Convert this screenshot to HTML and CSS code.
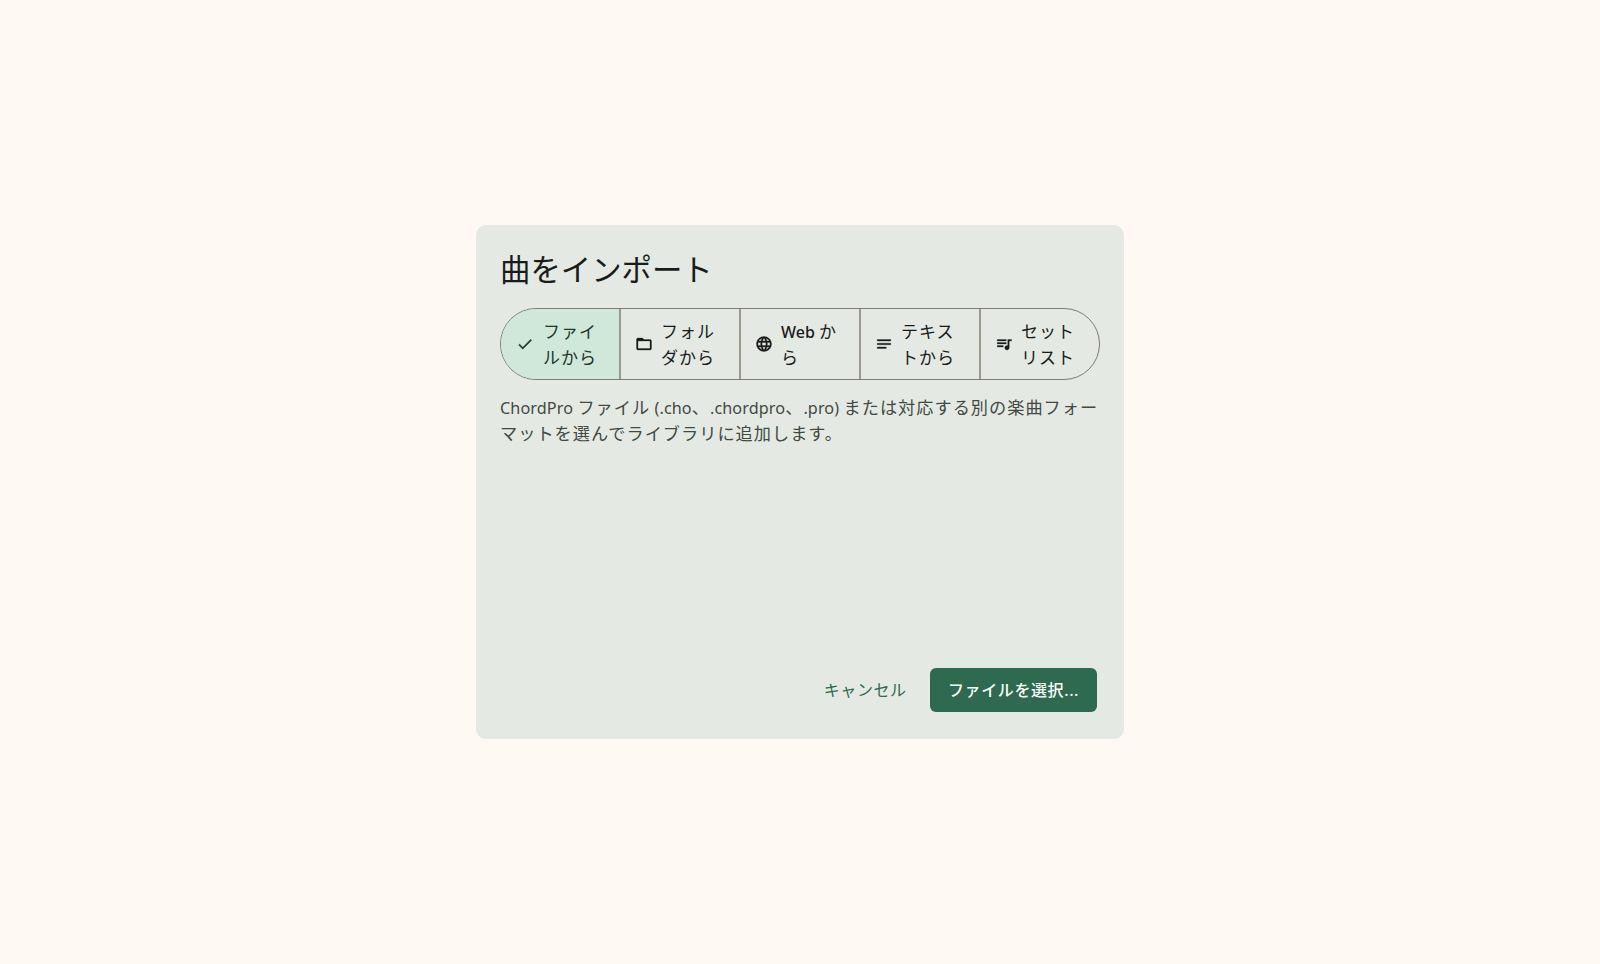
FILE: index.html
```html
<!DOCTYPE html>
<html lang="ja">
<head>
  <meta charset="UTF-8">
  <title>曲をインポート</title>
  <link rel="stylesheet" href="styles.css">
</head>
<body>
  <div class="dialog">
    <h2>曲をインポート</h2>

    <div class="segments">
      <div class="segment selected">
        <svg class="icon" viewBox="0 0 24 24"><path d="M9 16.17 4.83 12l-1.42 1.41L9 19 21 7l-1.41-1.41z"/></svg>
        <span class="label">ファイルから</span>
      </div>
      <div class="segment">
        <svg class="icon" viewBox="0 0 24 24"><path d="M20 6h-8l-2-2H4c-1.1 0-2 .9-2 2v12c0 1.1.9 2 2 2h16c1.1 0 2-.9 2-2V8c0-1.1-.9-2-2-2zm0 12H4V8h16v10z"/></svg>
        <span class="label">フォルダから</span>
      </div>
      <div class="segment">
        <svg class="icon" viewBox="0 0 24 24"><path d="M11.99 2C6.47 2 2 6.48 2 12s4.47 10 9.99 10C17.52 22 22 17.52 22 12S17.52 2 11.99 2zm6.93 6h-2.95c-.32-1.25-.78-2.45-1.38-3.56 1.84.63 3.37 1.91 4.33 3.56zM12 4.04c.83 1.2 1.48 2.53 1.91 3.96h-3.82c.43-1.43 1.08-2.76 1.91-3.96zM4.26 14C4.1 13.36 4 12.69 4 12s.1-1.36.26-2h3.38c-.08.66-.14 1.32-.14 2s.06 1.34.14 2H4.26zm.82 2h2.95c.32 1.25.78 2.45 1.38 3.56-1.84-.63-3.37-1.9-4.33-3.56zm2.95-8H5.08c.96-1.66 2.49-2.93 4.33-3.56C8.81 5.55 8.35 6.75 8.03 8zM12 19.96c-.83-1.2-1.48-2.53-1.91-3.96h3.82c-.43 1.43-1.08 2.76-1.91 3.96zM14.34 14H9.66c-.09-.66-.16-1.32-.16-2s.07-1.35.16-2h4.68c.09.65.16 1.32.16 2s-.07 1.34-.16 2zm.25 5.56c.6-1.11 1.06-2.31 1.38-3.56h2.95c-.96 1.65-2.49 2.93-4.33 3.56zM16.36 14c.08-.66.14-1.32.14-2s-.06-1.34-.14-2h3.38c.16.64.26 1.31.26 2s-.1 1.36-.26 2h-3.38z"/></svg>
        <span class="label"><span class="latin">Web </span>から</span>
      </div>
      <div class="segment">
        <svg class="icon" viewBox="0 0 24 24"><path d="M3 18h12v-2H3v2zM3 6v2h18V6H3zm0 7h18v-2H3v2z"/></svg>
        <span class="label">テキストから</span>
      </div>
      <div class="segment">
        <svg class="icon" viewBox="0 0 24 24"><path d="M15 6H3v2h12V6zm0 4H3v2h12v-2zM3 16h8v-2H3v2zM17 6v8.18c-.31-.11-.65-.18-1-.18-1.66 0-3 1.34-3 3s1.34 3 3 3 3-1.34 3-3V8h3V6h-5z"/></svg>
        <span class="label">セットリスト</span>
      </div>
    </div>

    <p class="desc"><span class="latin">ChordPro </span>ファイル<span class="latin"> (.cho</span>、<span class="latin">.chordpro</span>、<span class="latin">.pro) </span><span>または対応する別の楽曲フォー</span><span>マットを選んでライブラリに追加します。</span></p>

    <div class="actions">
      <button class="btn-text">キャンセル</button>
      <button class="btn-filled">ファイルを選択<span class="latin">...</span></button>
    </div>
  </div>
</body>
</html>
```

FILE: styles.css
```css
* {
  box-sizing: border-box;
}
body {
  margin: 0;
  height: 964px;
  display: flex;
  align-items: center;
  justify-content: center;
  background-color: #fff8f3;
  color: #191c1a;
  font-family: "Noto Sans", "Noto Sans CJK JP", sans-serif;
}
.dialog {
  width: 648px;
  height: 514px;
  padding: 24px;
  display: flex;
  flex-direction: column;
  background-color: #e4e9e3;
  border-radius: 10px;
}
h2 {
  margin: 0 0 16px;
  padding-top: 1px;
  font-size: 30.4px;
  line-height: 40px;
  font-weight: 400;
  height: 43px;
}
.segments {
  display: flex;
  height: 72px;
  border: 1px solid #7d7b73;
  border-radius: 36px;
  overflow: hidden;
}
.segment {
  flex: 0 0 120px;
  display: flex;
  align-items: center;
  padding: 0 16px 0 14px;
  gap: 8px;
  border-right: 2px solid #9a988f;
  font-size: 17px;
  letter-spacing: 1px;
  line-height: 26px;
}
.segment:first-child {
  padding-left: 15px;
  gap: 9px;
}
.segment:last-child {
  flex: 1;
  border-right: none;
}
.segment.selected {
  background-color: #cfe8d9;
  color: #24352b;
}
.segment .latin {
  font-size: 16px;
  font-weight: 500;
  letter-spacing: 0;
}
.icon {
  width: 18px;
  height: 18px;
  flex-shrink: 0;
  fill: currentColor;
  stroke: currentColor;
  stroke-width: 0.4;
}
.label {
  min-width: 0;
  padding-top: 2px;
}
.desc {
  margin: 15px 0 0;
  font-size: 17.2px;
  letter-spacing: 1px;
  line-height: 26px;
  color: #414943;
}
.desc .latin {
  font-size: 16.2px;
  letter-spacing: 0.1px;
}
.actions {
  margin-top: auto;
  display: flex;
  justify-content: flex-end;
  align-items: center;
  gap: 7px;
  padding-right: 2.7px;
  margin-bottom: 3px;
}
button {
  font-family: inherit;
  font-size: 16px;
  letter-spacing: 0.6px;
  font-weight: 500;
  height: 44px;
  border: none;
  border-radius: 6px;
  padding: 0 16px 2px;
}
.btn-text {
  background: none;
  color: #2d6a4f;
  font-weight: 400;
}
.btn-filled {
  width: 167.6px;
  padding: 0 0 2px;
  background-color: #2d6a4f;
  color: #ffffff;
}
```
